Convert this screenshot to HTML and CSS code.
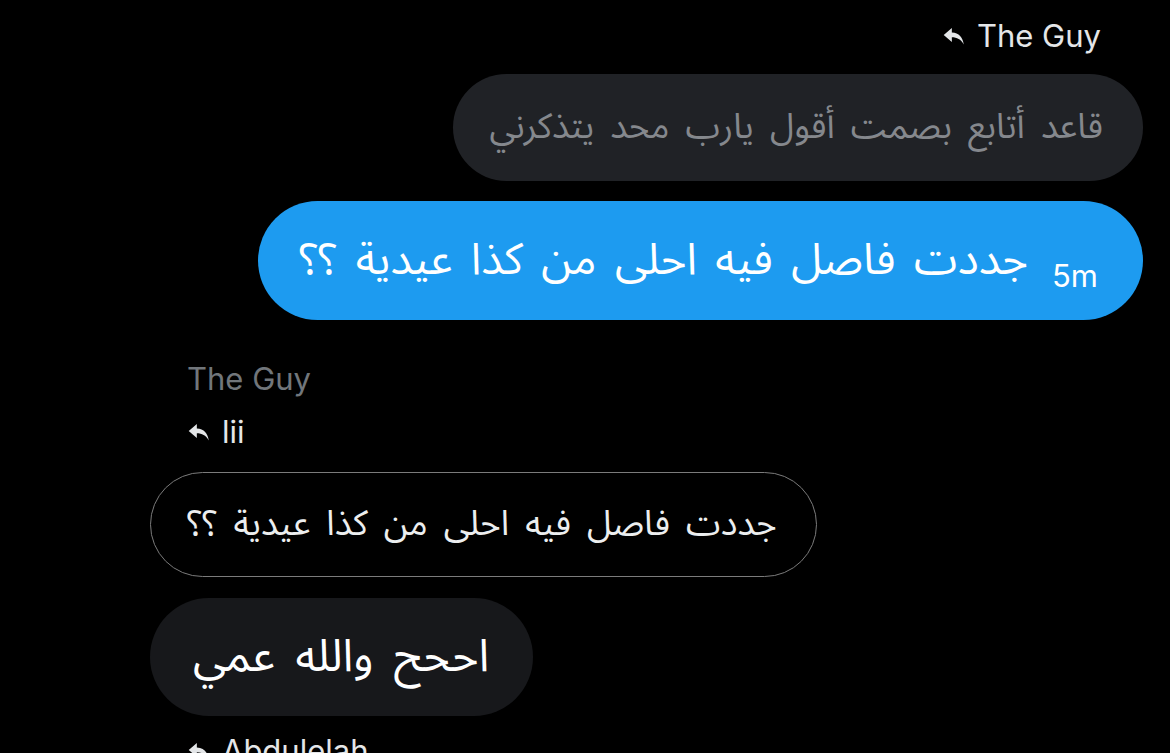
FILE: index.html
```html
<!DOCTYPE html>
<html lang="en">
<head>
    <meta charset="UTF-8">
    <meta name="viewport" content="width=device-width, initial-scale=1.0">
    <title>Messages</title>
    <link rel="stylesheet" href="styles.css">
</head>
<body>
    <div class="thread">
        <!-- Outgoing reply -->
        <div class="reply-label right">
            <svg class="reply-icon" viewBox="0 0 24 24"><path d="M10 4.5 L2.5 11 L10 17.5 V13.2 C14.8 13.2 18.2 15 21 19.8 C20.2 13.6 16.6 8.8 10 8.8 Z"/></svg>
            <span>The Guy</span>
        </div>
        <div class="bubble quoted right" dir="rtl">قاعد أتابع بصمت أقول يارب محد يتذكرني</div>
        <div class="bubble sent right">
            <span class="sent-text" dir="rtl">جددت فاصل فيه احلى من كذا عيدية ؟؟</span>
            <span class="time">5m</span>
        </div>

        <!-- Incoming reply -->
        <div class="sender-name">The Guy</div>
        <div class="reply-label left">
            <svg class="reply-icon" viewBox="0 0 24 24"><path d="M10 4.5 L2.5 11 L10 17.5 V13.2 C14.8 13.2 18.2 15 21 19.8 C20.2 13.6 16.6 8.8 10 8.8 Z"/></svg>
            <span>lii</span>
        </div>
        <div class="bubble outlined left" dir="rtl">جددت فاصل فيه احلى من كذا عيدية ؟؟</div>
        <div class="bubble received left" dir="rtl">اححح والله عمي</div>
        <div class="reply-label left">
            <svg class="reply-icon" viewBox="0 0 24 24"><path d="M10 4.5 L2.5 11 L10 17.5 V13.2 C14.8 13.2 18.2 15 21 19.8 C20.2 13.6 16.6 8.8 10 8.8 Z"/></svg>
            <span>Abdulelah</span>
        </div>
    </div>
</body>
</html>
```

FILE: styles.css
```css
body {
    margin: 0;
    padding: 0;
    background-color: #000;
    font-family: Inter, Roboto, "Noto Sans Arabic", "DejaVu Sans", sans-serif;
    color: #e7e9ea;
    height: 753px;
    overflow: hidden;
}

.thread {
    display: flex;
    flex-direction: column;
    padding: 18px 27px 0 150px;
}

.right {
    align-self: flex-end;
}

.left {
    align-self: flex-start;
}

.reply-label {
    display: flex;
    align-items: center;
    gap: 10px;
    font-size: 31px;
    line-height: 36px;
    color: #e4e6e8;
}

.reply-label.right {
    margin-right: 42px;
    margin-bottom: 20px;
}

.reply-label.left {
    margin-left: 36px;
    margin-top: 17px;
}

.reply-icon {
    width: 26px;
    height: 26px;
    fill: #e4e6e8;
}

.sender-name {
    margin: 41px 0 0 37px;
    font-size: 31px;
    line-height: 36px;
    color: #71767b;
}

.bubble {
    border-radius: 60px;
    font-family: "Noto Sans Arabic", "DejaVu Sans", sans-serif;
}

.quoted {
    background: #202226;
    color: #85888d;
    font-size: 35px;
    line-height: 47px;
    word-spacing: 7px;
    padding: 30px 40px 30px 37px;
}

.sent {
    display: flex;
    align-items: flex-end;
    gap: 24px;
    margin-top: 20px;
    background: #1d9bf0;
    color: #fff;
    padding: 29px 45px 30px 41px;
}

.sent-text {
    font-size: 44px;
    line-height: 60px;
    word-spacing: 7px;
}

.time {
    font-family: Inter, Roboto, sans-serif;
    font-size: 31px;
    line-height: 36px;
    margin-bottom: -4px;
}

.outlined {
    margin-top: 22px;
    border: 1.5px solid #7b7b7b;
    color: #eceeef;
    font-size: 35px;
    line-height: 47px;
    word-spacing: 7px;
    padding: 28px 39px 28px 36px;
}

.received {
    margin-top: 21px;
    background: #17181b;
    color: #fff;
    font-size: 45px;
    line-height: 60px;
    word-spacing: 9px;
    padding: 29px 44px 29px 43px;
}
```
